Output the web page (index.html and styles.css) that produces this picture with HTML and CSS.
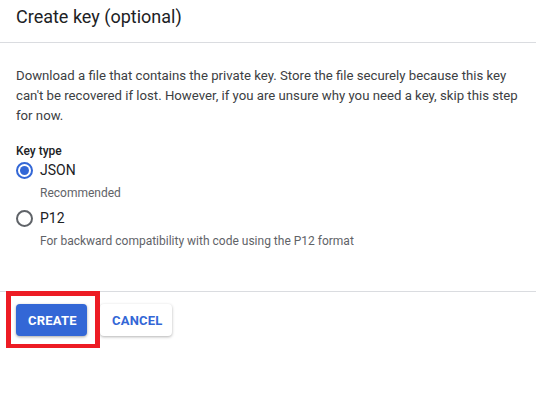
FILE: index.html
```html
<!DOCTYPE html>
<html>
<head>
<meta charset="utf-8">
<link rel="stylesheet" href="styles.css">
</head>
<body>
<div class="panel">
  <div class="header">Create key (optional)</div>
  <div class="content">
    <p class="desc">Download a file that contains the private key. Store the file securely because this key can't be recovered if lost. However, if you are unsure why you need a key, skip this step for now.</p>
    <div class="label">Key type</div>
    <div class="option">
      <span class="radio checked"></span>
      <span class="opt-name">JSON</span>
    </div>
    <div class="hint">Recommended</div>
    <div class="option">
      <span class="radio"></span>
      <span class="opt-name">P12</span>
    </div>
    <div class="hint">For backward compatibility with code using the P12 format</div>
  </div>
  <div class="actions">
    <div class="create-wrap">
      <button class="btn primary">CREATE</button>
      <span class="highlight"></span>
    </div>
    <button class="btn secondary">CANCEL</button>
  </div>
</div>
</body>
</html>
```
FILE: styles.css
```css
html, body {
  margin: 0;
  padding: 0;
  background: #fff;
}
body {
  font-family: Roboto, "Liberation Sans", Arial, sans-serif;
  color: #3c4043;
}
.panel {
  width: 536px;
}
.header {
  font-size: 18px;
  line-height: 26px;
  color: #202124;
  padding: 4px 16px 12px;
  border-bottom: 1px solid #dadce0;
}
.content {
  padding: 23px 16px 35px;
  border-bottom: 1px solid #dadce0;
}
.desc {
  margin: 0 0 17px;
  font-size: 13.2px;
  line-height: 20px;
  color: #3c4043;
}
.label {
  font-size: 12px;
  line-height: 16px;
  font-weight: 500;
  color: #202124;
}
.option {
  display: flex;
  align-items: center;
  height: 20px;
  margin-top: 1px;
}
.radio {
  box-sizing: border-box;
  width: 17px;
  height: 17px;
  border: 2px solid #5f6368;
  border-radius: 50%;
  margin: 0 7px 0 0;
  display: flex;
  align-items: center;
  justify-content: center;
}
.radio.checked {
  border-color: #3367d6;
}
.radio.checked::after {
  content: "";
  width: 9px;
  height: 9px;
  border-radius: 50%;
  background: #3367d6;
}
.opt-name {
  font-size: 14px;
  color: #202124;
}
.hint {
  font-size: 12px;
  line-height: 16px;
  color: #5f6368;
  padding-left: 24px;
  margin-top: 5px;
  margin-bottom: 7px;
}
.actions {
  display: flex;
  align-items: center;
  gap: 13px;
  padding: 12px 16px;
}
.create-wrap {
  position: relative;
  display: flex;
}
.highlight {
  position: absolute;
  left: -10px;
  top: -13px;
  width: 84px;
  height: 48px;
  border: 5px solid #ed1c24;
}
.btn {
  font-family: Roboto, "Liberation Sans", Arial, sans-serif;
  font-size: 13px;
  font-weight: 700;
  letter-spacing: 0.2px;
  height: 32px;
  padding: 0 12px;
  border: none;
  border-radius: 4px;
  cursor: pointer;
}
.primary {
  width: 71px;
  background: #3367d6;
  color: #fff;
  box-shadow: 0 1px 3px rgba(0,0,0,0.35);
}
.secondary {
  width: 72px;
  background: #fff;
  color: #3367d6;
  box-shadow: 0 1px 3px rgba(0,0,0,0.3);
}
```
